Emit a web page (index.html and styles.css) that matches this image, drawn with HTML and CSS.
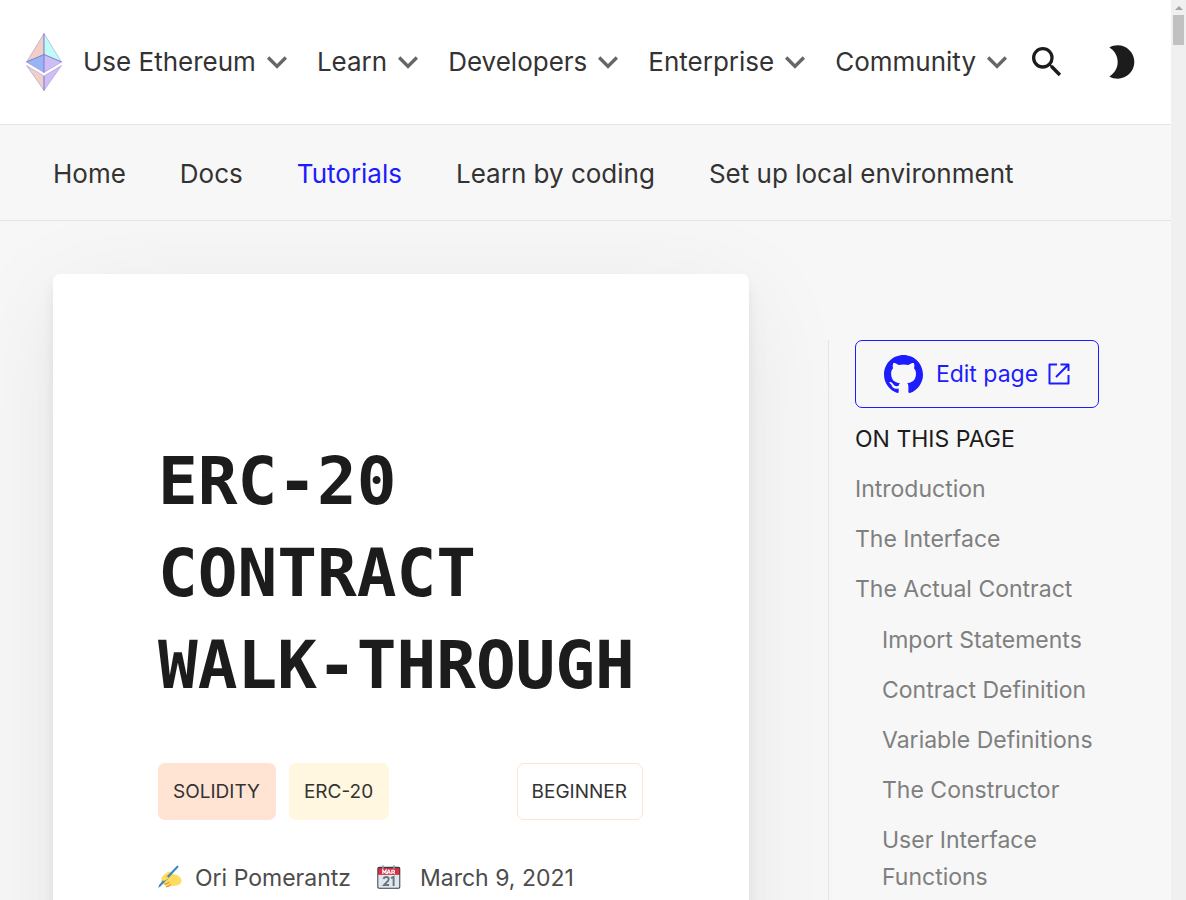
FILE: index.html
```html
<!DOCTYPE html>
<html lang="en">
<head>
<meta charset="utf-8">
<meta name="viewport" content="width=device-width, initial-scale=1">
<title>ERC-20 Contract Walk-Through</title>
<link rel="stylesheet" href="styles.css">
</head>
<body>
<svg class="sprite" aria-hidden="true">
  <symbol id="chevron" viewBox="0 0 24 24"><path d="M16.59 8.59L12 13.17 7.41 8.59 6 10l6 6 6-6z"/></symbol>
</svg>
<div class="page">
  <header class="topbar">
    <a class="logo" href="#" aria-label="Ethereum home">
      <svg viewBox="0 0 36 58" aria-hidden="true">
        <g stroke="#8f85dc" stroke-opacity=".6" stroke-width=".8" stroke-linejoin="round">
          <path fill="#f0d0c6" d="M18 .5L.5 29 18 21.500z"/>
          <path fill="#bffcf7" d="M18 .5L35.500 29 18 21.500z"/>
          <path fill="#98b4f3" d="M18 21.500L.5 29 18 39.500z"/>
          <path fill="#cfbdf4" d="M18 21.500L35.500 29 18 39.500z"/>
          <path fill="#f0d0c6" d="M.5 32.500L18 43v14.500z"/>
          <path fill="#cfbdf4" d="M35.500 32.500L18 43v14.500z"/>
        </g>
        <path fill="none" stroke="#7d7bd8" stroke-opacity=".7" d="M18 .5v39M18 43v14.500M.5 29L18 21.500 35.500 29"/>
      </svg>
    </a>
    <nav class="menu" aria-label="Main">
      <button type="button">Use Ethereum<svg aria-hidden="true"><use href="#chevron"/></svg></button>
      <button type="button">Learn<svg aria-hidden="true"><use href="#chevron"/></svg></button>
      <button type="button">Developers<svg aria-hidden="true"><use href="#chevron"/></svg></button>
      <button type="button">Enterprise<svg aria-hidden="true"><use href="#chevron"/></svg></button>
      <button type="button">Community<svg aria-hidden="true"><use href="#chevron"/></svg></button>
    </nav>
    <div class="actions">
      <button type="button" aria-label="Search"><svg viewBox="0 0 24 24"><path d="M15.5 14h-.79l-.28-.27A6.471 6.471 0 0 0 16 9.500 6.500 6.500 0 1 0 9.500 16c1.610 0 3.090-.59 4.230-1.570l.27.28v.79l5 4.990L20.490 19l-4.990-5zm-6 0C7.010 14 5 11.990 5 9.500S7.010 5 9.500 5 14 7.010 14 9.500 11.990 14 9.500 14z"/></svg></button>
      <button type="button" aria-label="Dark mode"><svg viewBox="0 0 24 24"><path d="M10 2c-1.820 0-3.530.5-5 1.350C7.990 5.080 10 8.300 10 12s-2.010 6.920-5 8.650C6.470 21.500 8.180 22 10 22c5.520 0 10-4.480 10-10S15.520 2 10 2z"/></svg></button>
    </div>
  </header>
  <nav class="subnav" aria-label="Developers">
    <a href="#">Home</a>
    <a href="#">Docs</a>
    <a class="active" href="#" aria-current="page">Tutorials</a>
    <a href="#">Learn by coding</a>
    <a href="#">Set up local environment</a>
  </nav>
  <div class="content">
    <main class="card">
      <h1>ERC-20 CONTRACT WALK-THROUGH</h1>
      <div class="tags">
        <span class="tag peach">SOLIDITY</span>
        <span class="tag cream">ERC-20</span>
        <span class="tag level">BEGINNER</span>
      </div>
      <div class="meta">
        <svg viewBox="0 0 24 24" aria-hidden="true">
          <path fill="#ffdc5d" d="M3.500 12.500C6 9.500 10 6 12.500 6.800c1.200.4 1 1.600 0 2.400 3.500-.9 9.500 1.300 10.800 5.300.8 3-1.300 5.500-4.800 6-2.500.5-4 .6-6 .2-1.500 1-3 1.600-4.500 1.200l-1.500-3c-2 0-4-.5-3.800-2 .1-1 .9-1.300 2-1.800-1-.5-1.800-1.500-1.200-2.600z"/>
          <path fill="none" stroke="#ef9645" stroke-width="1.300" stroke-linecap="round" d="M12.500 9.200L9 11.500M4.500 15.200c1.500.4 3 0 4.500-1M6.500 19c2 0 3-.5 4.500-1.800M8.500 21.700c1.300-.2 2.600-.8 4-2"/>
          <path fill="#3b88c3" d="M18.500 1.200c.9-1 2.600-.4 1.900 1L10.200 13.300 3 21 .2 23l1-3.200 6.600-7.300z"/>
          <path fill="#ffdc5d" d="M5.200 13.500c1-1 3.200-2.400 4.600-1.700.9.600.4 1.700-.6 2.500-1.200 1-3 1.800-4.200 1.400-.8-.4-.8-1.300.2-2.200z"/>
        </svg>
        <span class="author">Ori Pomerantz</span>
        <svg viewBox="0 0 24 24" aria-hidden="true">
          <rect x=".3" y="1.800" width="23" height="22" rx="1.800" fill="#363c42"/>
          <path fill="#e1e8ed" d="M1.300 9.500h21v12.200q0 1-1 1h-19q-1 0-1-1z"/>
          <path fill="#dd2e44" d="M1.300 3.200h21v6.500h-21z"/>
          <g stroke="#8f9ca6" stroke-width="1.400" stroke-linecap="round"><path d="M6 .7v2.800M17 .7v2.800"/></g>
          <g fill="none" stroke="#fff" stroke-width="1.100"><path d="M5.800 9V5l1.600 2.400L9 5v4M10 9l1.400-4h.6L13.400 9M10.600 7.800h2.300M14.800 9V5.200h1.700q1 0 1 1t-1 1h-1.700M16.400 7.300L17.800 9"/></g>
          <g fill="none" stroke="#66757f" stroke-width="1.900"><path d="M6.600 14q.4-2 2.600-2 2.500 0 2.500 1.900 0 1.400-2 3.300L7.100 20h5M14 13.200l2.600-1.200v9"/></g>
        </svg>
        <time datetime="2021-03-09">March 9, 2021</time>
      </div>
    </main>
    <aside class="toc">
      <a class="edit" href="#">
        <svg class="github" viewBox="0 0 16 16" aria-hidden="true"><path d="M8 0C3.580 0 0 3.580 0 8c0 3.540 2.290 6.530 5.470 7.590.4.07.55-.17.55-.38 0-.19-.01-.82-.01-1.490-2.010.37-2.530-.49-2.690-.94-.09-.23-.48-.94-.82-1.130-.28-.15-.68-.52-.01-.53.63-.01 1.080.58 1.230.82.72 1.210 1.870.87 2.330.66.07-.52.28-.87.51-1.070-1.780-.2-3.640-.89-3.640-3.950 0-.87.31-1.590.82-2.150-.08-.2-.36-1.020.08-2.120 0 0 .67-.21 2.200.82.64-.18 1.320-.27 2-.27s1.360.09 2 .27c1.530-1.040 2.200-.82 2.200-.82.44 1.100.16 1.920.08 2.120.51.56.82 1.270.82 2.150 0 3.070-1.870 3.750-3.650 3.950.29.25.54.73.54 1.480 0 1.070-.01 1.930-.01 2.200 0 .21.15.46.55.38A8.010 8.010 0 0 0 16 8c0-4.420-3.580-8-8-8z"/></svg>
        <span>Edit page</span>
        <svg class="external" viewBox="0 0 22 22" aria-hidden="true"><path d="M9 1.500H1.500v19h19V12M8 14L20 2M12.500 1.500h8V8"/></svg>
      </a>
      <h2>ON THIS PAGE</h2>
      <ul>
        <li><a href="#">Introduction</a></li>
        <li><a href="#">The Interface</a></li>
        <li><a href="#">The Actual Contract</a>
          <ul>
            <li><a href="#">Import Statements</a></li>
            <li><a href="#">Contract Definition</a></li>
            <li><a href="#">Variable Definitions</a></li>
            <li><a href="#">The Constructor</a></li>
            <li><a href="#">User Interface Functions</a></li>
          </ul>
        </li>
      </ul>
    </aside>
  </div>
</div>
<div class="scrollbar" aria-hidden="true"><i class="arrow"></i><i class="thumb"></i></div>
</body>
</html>
```
FILE: styles.css
```css
* { box-sizing: border-box; }

body {
  margin: 0;
  height: 100vh;
  overflow: hidden;
  display: flex;
  background: #f7f7f7;
  color: #333;
  font-family: Inter, "Liberation Sans", sans-serif;
  font-size: 26px;
  line-height: 42px;
}

a { color: inherit; text-decoration: none; }

button {
  border: 0;
  padding: 0;
  background: none;
  color: inherit;
  font: inherit;
  cursor: pointer;
}

svg { display: block; flex: none; }
.sprite { position: absolute; width: 0; height: 0; }

.page {
  flex: 1;
  min-width: 0;
  height: 100vh;
  overflow: hidden;
}

.topbar {
  display: flex;
  align-items: center;
  height: 125px;
  padding: 0 30px 0 26px;
  background: #fff;
  border-bottom: 1px solid #e5e5e5;
}

.logo svg { width: 36px; height: 58px; }

.menu {
  display: flex;
  gap: 20px;
  margin-left: 21px;
}

.menu button {
  display: flex;
  align-items: center;
  gap: 1px;
  white-space: nowrap;
}

.menu svg { width: 40px; height: 40px; fill: #666; }

.actions {
  display: flex;
  flex: 1;
  justify-content: space-between;
  margin-left: 10px;
}

.actions svg { width: 40px; height: 40px; fill: #1c1c1c; }

.subnav {
  position: relative;
  z-index: 1;
  display: flex;
  align-items: center;
  gap: 54px;
  height: 96px;
  padding: 2px 53px 0;
  background: #f7f7f7;
  border-bottom: 1px solid #e5e5e5;
  white-space: nowrap;
}

.subnav .active { color: #1c1cff; }

.content {
  display: flex;
  align-items: flex-start;
  gap: 79px;
  padding: 53px;
}

.card {
  flex: 1;
  min-width: 0;
  min-height: 100vh;
  padding: 162px 106px 106px 105px;
  background: #fff;
  border-radius: 7px;
  box-shadow: 0 23px 109px rgba(0, 0, 0, .07), 0 16px 28px rgba(0, 0, 0, .03), 0 7px 12px rgba(0, 0, 0, .05);
}

h1 {
  margin: 0 0 51px;
  color: #1c1c1c;
  font-family: "DejaVu Sans Mono", "Liberation Mono", monospace;
  font-size: 66px;
  font-weight: 700;
  line-height: 92px;
}

.tags { display: flex; gap: 13px; }

.tag {
  padding: 7px 15px 7px 14px;
  border: 1px solid transparent;
  border-radius: 7px;
  font-size: 19px;
  line-height: 41px;
}

.peach { background: #ffe3d3; }
.cream { background: #fff7df; }
.level { margin-left: auto; border-color: #ffe3d3; }

.meta {
  display: flex;
  align-items: center;
  margin-top: 40px;
  color: #4c4c4c;
  font-size: 23px;
  line-height: 37px;
  white-space: nowrap;
}

.meta svg { width: 24px; height: 24px; margin-bottom: 3px; }
.author { margin: 0 26px 0 13px; }
.meta time { margin-left: 19px; }

.toc {
  width: 290px;
  margin-top: 66px;
  padding: 0 19px 26px 26px;
  border-left: 1px solid #e5e5e5;
  color: #7f7f7f;
  font-size: 23px;
  line-height: 37px;
}

.edit {
  display: flex;
  align-items: center;
  justify-content: center;
  height: 68px;
  border: 1px solid #1c1cff;
  border-radius: 7px;
  color: #1c1cff;
}

.github { width: 39px; height: 39px; margin-right: 13px; fill: #1c1cff; }

.external {
  width: 22px;
  height: 22px;
  margin-left: 10px;
  fill: none;
  stroke: #1c1cff;
  stroke-width: 2;
  stroke-linejoin: round;
}

.toc h2 {
  margin: 13px 0;
  color: #1c1c1c;
  font-size: 23px;
  font-weight: 400;
}

.toc ul {
  display: grid;
  gap: 13px;
  margin: 0;
  padding: 0;
  list-style: none;
}

.toc ul ul { margin-top: 14px; padding-left: 27px; }

.scrollbar {
  display: flex;
  flex-direction: column;
  align-items: center;
  width: 15px;
  background: #f0f0f0;
}

.arrow {
  margin-top: 6px;
  border: 4px solid transparent;
  border-top-width: 0;
  border-bottom-color: #a3a3a3;
}

.thumb {
  width: 11px;
  height: 30px;
  margin-top: 5px;
  background: #c1c1c1;
}
```
